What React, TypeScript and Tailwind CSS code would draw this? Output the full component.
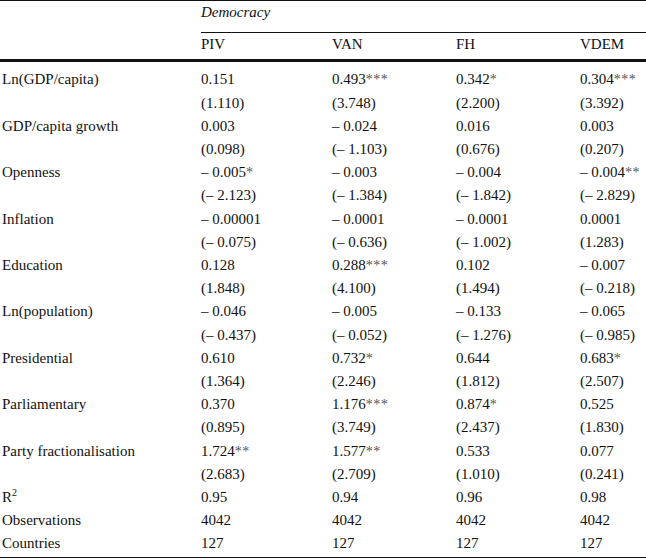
const cols = 'grid grid-cols-[199px_131px_124px_124px_66px] pl-[2px]';

type Cell = { v: string; s?: string };

const c = (v: string, s?: string): Cell => ({ v, s });

const rows: { label: React.ReactNode; est: Cell[]; t: string[] }[] = [
  { label: 'Ln(GDP/capita)', est: [c('0.151'), c('0.493', '***'), c('0.342', '*'), c('0.304', '***')], t: ['(1.110)', '(3.748)', '(2.200)', '(3.392)'] },
  { label: 'GDP/capita growth', est: [c('0.003'), c('\u2013 0.024'), c('0.016'), c('0.003')], t: ['(0.098)', '(\u2013 1.103)', '(0.676)', '(0.207)'] },
  { label: 'Openness', est: [c('\u2013 0.005', '*'), c('\u2013 0.003'), c('\u2013 0.004'), c('\u2013 0.004', '**')], t: ['(\u2013 2.123)', '(\u2013 1.384)', '(\u2013 1.842)', '(\u2013 2.829)'] },
  { label: 'Inflation', est: [c('\u2013 0.00001'), c('\u2013 0.0001'), c('\u2013 0.0001'), c('0.0001')], t: ['(\u2013 0.075)', '(\u2013 0.636)', '(\u2013 1.002)', '(1.283)'] },
  { label: 'Education', est: [c('0.128'), c('0.288', '***'), c('0.102'), c('\u2013 0.007')], t: ['(1.848)', '(4.100)', '(1.494)', '(\u2013 0.218)'] },
  { label: 'Ln(population)', est: [c('\u2013 0.046'), c('\u2013 0.005'), c('\u2013 0.133'), c('\u2013 0.065')], t: ['(\u2013 0.437)', '(\u2013 0.052)', '(\u2013 1.276)', '(\u2013 0.985)'] },
  { label: 'Presidential', est: [c('0.610'), c('0.732', '*'), c('0.644'), c('0.683', '*')], t: ['(1.364)', '(2.246)', '(1.812)', '(2.507)'] },
  { label: 'Parliamentary', est: [c('0.370'), c('1.176', '***'), c('0.874', '*'), c('0.525')], t: ['(0.895)', '(3.749)', '(2.437)', '(1.830)'] },
  { label: 'Party fractionalisation', est: [c('1.724', '**'), c('1.577', '**'), c('0.533'), c('0.077')], t: ['(2.683)', '(2.709)', '(1.010)', '(0.241)'] },
];

const footer: { label: React.ReactNode; vals: string[] }[] = [
  { label: <>R<sup className="text-[10px] top-[-0.6em]">2</sup></>, vals: ['0.95', '0.94', '0.96', '0.98'] },
  { label: 'Observations', vals: ['4042', '4042', '4042', '4042'] },
  { label: 'Countries', vals: ['127', '127', '127', '127'] },
];

function Stars({ s }: { s?: string }) {
  if (!s) return null;
  return <span className="text-[#555] text-[14px] tracking-[0.5px]">{s}</span>;
}

export default function App() {
  return (
    <div className="w-[646px] h-[558px] bg-white text-[#111] text-[15px] leading-[23.2px] font-['Liberation_Serif','Times_New_Roman',serif] overflow-hidden">
      <div className="border-t border-[#111]" />
      {/* header */}
      <div className={cols}>
        <div />
        <div className="col-span-4 italic pb-[8px] border-b border-[#111]">Democracy</div>
      </div>
      <div className={cols}>
        <div />
        <div>PIV</div>
        <div>VAN</div>
        <div>FH</div>
        <div>VDEM</div>
      </div>
      <div className="mt-[3px] h-[3px] bg-[#111]" />

      {/* body */}
      <div className="pt-[6px]">
        {rows.map((r, i) => (
          <div key={i}>
            <div className={cols}>
              <div>{r.label}</div>
              {r.est.map((e, j) => (
                <div key={j}>
                  {e.v}
                  <Stars s={e.s} />
                </div>
              ))}
            </div>
            <div className={cols}>
              <div />
              {r.t.map((t, j) => (
                <div key={j}>{t}</div>
              ))}
            </div>
          </div>
        ))}
        {footer.map((f, i) => (
          <div key={i} className={cols}>
            <div>{f.label}</div>
            {f.vals.map((v, j) => (
              <div key={j}>{v}</div>
            ))}
          </div>
        ))}
      </div>
      <div className="mt-[1px] h-[2px] bg-[#111]" />
    </div>
  );
}
